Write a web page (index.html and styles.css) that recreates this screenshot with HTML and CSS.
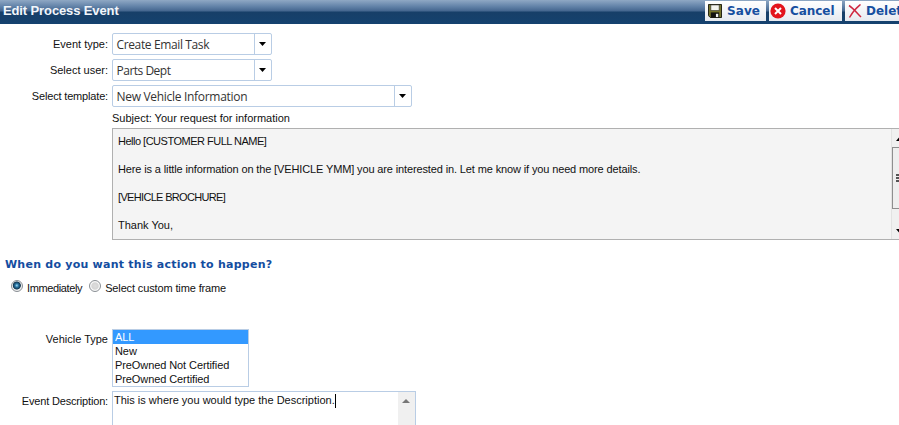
FILE: index.html
```html
<!DOCTYPE html>
<html lang="en">
<head>
<meta charset="utf-8">
<title>Edit Process Event</title>
<link rel="stylesheet" href="styles.css">
</head>
<body>
<header class="bar">
  <h1 class="title">Edit Process Event</h1>
  <div class="actions">
    <button class="btn save"><svg width="14" height="14" viewBox="0 0 15 15"><path d="M.5.5h14v14h-12l-2-2z" fill="#77752c" stroke="#15150a"/><path d="M3 1h9v6H3z" fill="#f4f4ef" stroke="#222" stroke-width=".6"/><path d="M3 9h9v5.5H3z" fill="#111"/><path d="M8.5 10.5h2.5V14H8.5z" fill="#eee"/></svg><span>Save</span></button>
    <button class="btn cancel"><svg width="16" height="16" viewBox="0 0 16 16"><circle cx="8" cy="8" r="7.6" fill="#e3141c"/><path d="M5 5l6 6M11 5l-6 6" stroke="#fff" stroke-width="2"/></svg><span>Cancel</span></button>
    <button class="btn delete"><svg width="14" height="14" viewBox="0 0 14 14"><path d="M1 1.5C5 4 9 9 13 13M12.500 .5C8 4 4 9 1.500 13.500" fill="none" stroke="#cf2740" stroke-width="1.500"/></svg><span>Delete</span></button>
  </div>
</header>
<main class="form">
  <div class="row"><label class="label">Event type:</label><div class="combo"><span class="value v1">Create Email Task</span><span class="drop"><svg width="7" height="4" viewBox="0 0 7 4"><path d="M0 0h7L3.500 4z"/></svg></span></div></div>
  <div class="row"><label class="label">Select user:</label><div class="combo"><span class="value v2">Parts Dept</span><span class="drop"><svg width="7" height="4" viewBox="0 0 7 4"><path d="M0 0h7L3.500 4z"/></svg></span></div></div>
  <div class="row"><label class="label tight">Select template:</label><div class="combo wide"><span class="value v3">New Vehicle Information</span><span class="drop"><svg width="7" height="4" viewBox="0 0 7 4"><path d="M0 0h7L3.500 4z"/></svg></span></div></div>
  <div class="subject">Subject: Your request for information</div>
  <div class="message">
    <div class="body">
      <p class="hello">Hello [CUSTOMER FULL NAME]</p>
      <p class="info">Here is a little information on the [VEHICLE YMM] you are interested in. Let me know if you need more details.</p>
      <p class="brochure">[VEHICLE BROCHURE]</p>
      <p>Thank You,</p>
    </div>
    <div class="scroll">
      <svg width="7" height="4" viewBox="0 0 7 4"><path d="M0 4h7L3.500 0z"/></svg>
      <div class="thumb"><i></i><i></i><i></i></div>
      <svg width="7" height="4" viewBox="0 0 7 4"><path d="M0 0h7L3.500 4z"/></svg>
    </div>
  </div>
  <h2 class="question">When do you want this action to happen?</h2>
  <div class="choices">
    <label class="choice"><span class="radio on"></span><span class="now">Immediately</span></label>
    <label class="choice"><span class="radio"></span><span class="later">Select custom time frame</span></label>
  </div>
  <div class="row types"><label class="label">Vehicle Type</label>
    <ul class="list"><li class="selected">ALL</li><li>New</li><li>PreOwned Not Certified</li><li>PreOwned Certified</li></ul>
  </div>
  <div class="row desc"><label class="label tight">Event Description:</label>
    <div class="area"><div class="typed"><span>This is where you would type the Description.</span><i class="caret"></i></div><div class="track"><svg width="8" height="4" viewBox="0 0 8 4"><path d="M0 4h8L4 0z" fill="#777"/></svg></div></div>
  </div>
</main>
</body>
</html>
```

FILE: styles.css
```css
* { box-sizing: border-box; }
body { margin: 0; height: 425px; overflow: hidden; background: #fff; color: #111; font: 11px/14px "Liberation Sans", Arial, sans-serif; }
svg { display: block; flex: none; }
p, h1, h2, ul { margin: 0; padding: 0; }

.bar { display: flex; justify-content: space-between; height: 24px; background: linear-gradient(#8fa8c4 0, #6585aa 6px, #44668f 11px, #173f68 12px, #15426f 24px); overflow: hidden; }
.title { padding: 3px 0 0 3px; color: #f1f6fb; font-size: 13px; line-height: 15px; font-weight: bold; letter-spacing: -.12px; white-space: nowrap; }
.actions { display: flex; gap: 3px; width: 194px; padding-top: 1px; }
.btn { display: flex; flex: none; align-items: center; height: 20px; margin: 0; padding: 0 0 0 3px; border: 0; background: linear-gradient(#fff, #e6eaf0); color: #164fa0; font: bold 12px/20px "DejaVu Sans", Verdana, sans-serif; white-space: nowrap; }
.save { width: 61px; gap: 5px; }
.save span { letter-spacing: .1px; }
.cancel { width: 73px; padding-left: 1px; gap: 4px; }
.cancel span { letter-spacing: -.05px; }
.delete { width: 70px; padding-left: 3px; gap: 4px; }

.form { padding-top: 9px; }
.row { display: flex; gap: 4px; height: 22px; margin-bottom: 4px; }
.label { width: 108px; padding-top: 4px; text-align: right; white-space: nowrap; }
.tight { letter-spacing: -.17px; }
.combo { display: flex; width: 160px; height: 22px; border: 1px solid #b9cde5; border-radius: 2px; }
.wide { width: 300px; }
.value { flex: 1; padding-left: 3.5px; color: #333; font: 12px/21px "Open Sans", "Segoe UI", sans-serif; white-space: nowrap; }
.v1 { letter-spacing: -.37px; }
.v2 { letter-spacing: -.5px; }
.v3 { letter-spacing: -.3px; }
.drop { display: flex; align-items: center; justify-content: center; width: 17px; padding-right: 1px; border-left: 1px solid #b9cde5; }

.subject { margin-left: 112px; height: 17px; }
.message { display: flex; width: 796px; height: 112px; margin-left: 112px; border: 1px solid #b0b0b0; background: #f4f4f4; }
.body { flex: 1; padding: 5px; }
.body p { margin-bottom: 14px; }
.hello { letter-spacing: -.5px; }
.info { letter-spacing: -.13px; }
.brochure { letter-spacing: -.67px; }
.scroll { width: 16px; display: flex; flex-direction: column; align-items: center; padding-top: 8px; border-left: 1px solid #e2e2e2; background: #f0f0f0; }
.thumb { display: flex; flex-direction: column; align-items: center; justify-content: center; gap: 1px; width: 16px; height: 62px; margin: 6px 0 20px; border: 1px solid #8e8e8e; background: #eee; }
.thumb i { width: 8px; height: 2px; background: #555; }

.question { margin: 18px 0 0 5px; height: 14px; color: #144da0; font: bold 11px/14px "DejaVu Sans", Verdana, sans-serif; letter-spacing: .24px; white-space: nowrap; }
.choices { display: flex; gap: 7px; margin: 8px 0 0 11px; height: 15px; }
.choice { display: flex; gap: 4px; white-space: nowrap; }
.choice span:last-child { padding-top: 1px; }
.now { letter-spacing: -.38px; }
.later { letter-spacing: -.13px; }
.radio { width: 12px; height: 12px; border: 1px solid #8a8f94; border-radius: 50%; background: radial-gradient(#ddd, #d5d5d5 45%, #f8f8f8 60%); }
.on { background: radial-gradient(circle at 48% 45%, #a4def2 0, #2b78a8 22%, #12364f 48%, #eee 58%); }

.types { margin-top: 34px; height: 58px; }
.types .label, .desc .label { padding-top: 3px; }
.list { width: 137px; height: 58px; border: 1px solid #b9cde5; list-style: none; letter-spacing: -.09px; }
.list li { height: 14px; padding-left: 2px; white-space: nowrap; }
.selected { background: #3399ff; color: #fff; }
.desc { height: 50px; }
.area { display: flex; width: 304px; height: 50px; border: 1px solid #b9cde5; }
.typed { display: flex; flex: 1; padding: 1px 0 0 1px; white-space: nowrap; }
.caret { width: 1px; height: 14px; margin-top: 1px; background: #000; }
.track { width: 17px; padding: 7px 0 0 4px; background: #f0f0f0; }
```
